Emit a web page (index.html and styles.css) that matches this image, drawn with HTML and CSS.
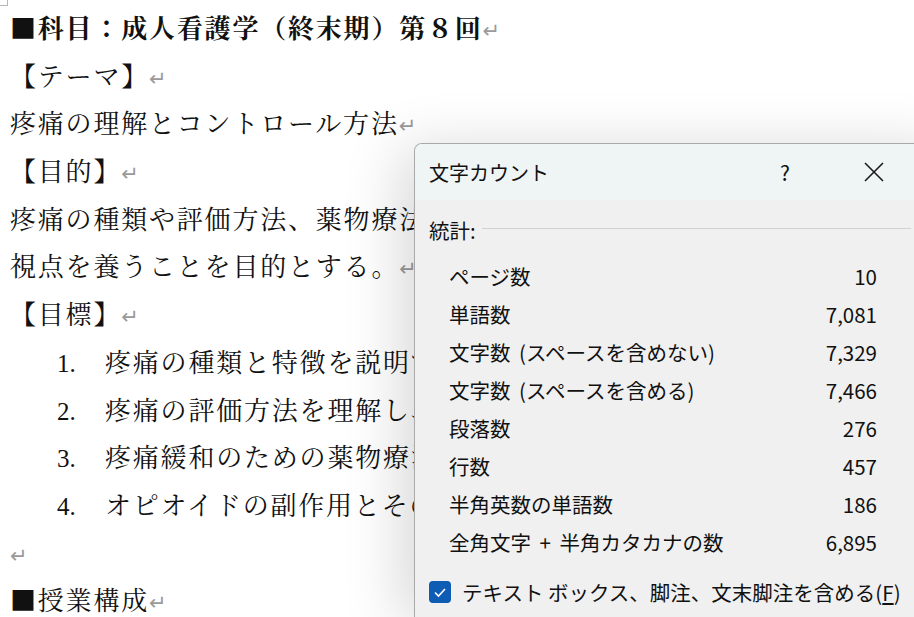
FILE: index.html
```html
<!DOCTYPE html>
<html lang="ja">
<head>
<meta charset="utf-8">
<link rel="stylesheet" href="styles.css">
</head>
<body>
<div class="corner"></div>
<main class="doc">
  <p class="line title">■科目：成人看護学（終末期）第８回<span class="pm">↵</span></p>
  <p class="line">【テーマ】<span class="pm">↵</span></p>
  <p class="line">疼痛の理解とコントロール方法<span class="pm">↵</span></p>
  <p class="line under">【目的】<span class="pm">↵</span></p>
  <p class="line under">疼痛の種類や評価方法、薬物療法</p>
  <p class="line under">視点を養うことを目的とする。<span class="pm">↵</span></p>
  <p class="line under">【目標】<span class="pm">↵</span></p>
  <p class="line under item"><span class="num">1.</span>疼痛の種類と特徴を説明で</p>
  <p class="line under item"><span class="num">2.</span>疼痛の評価方法を理解し、</p>
  <p class="line under item"><span class="num">3.</span>疼痛緩和のための薬物療法</p>
  <p class="line under item"><span class="num">4.</span>オピオイドの副作用とその</p>
  <p class="line under"><span class="pm">↵</span></p>
  <p class="line under">■授業構成<span class="pm">↵</span></p>
</main>

<section class="dialog">
  <header class="dlg-head">
    <span class="dlg-title">文字カウント</span>
    <span class="dlg-help">?</span>
    <svg class="dlg-close" width="22" height="22" viewBox="0 0 22 22"><path d="M2 2 L20 20 M20 2 L2 20" stroke="#1a1a1a" stroke-width="1.6" fill="none"/></svg>
  </header>
  <div class="dlg-body">
    <div class="group"><span>統計:</span><span class="rule"></span></div>
    <div class="stats">
      <div class="row"><span>ページ数</span><span>10</span></div>
      <div class="row"><span>単語数</span><span>7,081</span></div>
      <div class="row"><span>文字数 (スペースを含めない)</span><span>7,329</span></div>
      <div class="row"><span>文字数 (スペースを含める)</span><span>7,466</span></div>
      <div class="row"><span>段落数</span><span>276</span></div>
      <div class="row"><span>行数</span><span>457</span></div>
      <div class="row"><span>半角英数の単語数</span><span>186</span></div>
      <div class="row"><span>全角文字 + 半角カタカナの数</span><span>6,895</span></div>
    </div>
    <label class="check">
      <span class="box"><svg width="22" height="22" viewBox="0 0 22 22"><path d="M6 11.5 L9.5 15 L16 8" stroke="#fff" stroke-width="1.6" fill="none"/></svg></span>
      <span>テキスト ボックス、脚注、文末脚注を含める(<u>F</u>)</span>
    </label>
  </div>
</section>
</body>
</html>
```
FILE: styles.css
```css
html, body {
  margin: 0;
  padding: 0;
  background: #ffffff;
  overflow: hidden;
  width: 914px;
  height: 617px;
}
body {
  position: relative;
  font-family: "Noto Serif CJK JP", "Noto Sans CJK JP", serif;
  color: #111;
}
.corner {
  position: absolute;
  left: 0;
  top: 0;
  width: 7px;
  height: 5px;
  border-right: 1px solid #b8b8b8;
  border-bottom: 1px solid #b8b8b8;
}
.doc {
  padding: 3px 0 0 10px;
}
.line {
  margin: 0;
  height: 47.7px;
  line-height: 47.7px;
  font-size: 26px;
  letter-spacing: 1.8px;
  white-space: nowrap;
}
.under {
  width: 404px;
  overflow: hidden;
  box-sizing: border-box;
}
.title {
  font-weight: 700;
}
.pm {
  color: #9a9a9a;
  font-family: "DejaVu Sans", sans-serif;
  font-weight: 400;
  font-size: 21px;
  letter-spacing: 0;
}
.item {
  padding-left: 47px;
}
.num {
  display: inline-block;
  width: 48px;
  font-family: "Liberation Serif", serif;
  font-size: 25px;
  letter-spacing: 0;
}
.dialog {
  position: absolute;
  left: 414px;
  top: 143px;
  width: 540px;
  height: 474px;
  border: 1px solid #a9a9a9;
  border-bottom: 0;
  border-radius: 8px 8px 0 0;
  background: #f0f0f0;
  box-shadow: -12px 6px 60px rgba(0, 0, 0, 0.16);
  overflow: hidden;
  font-family: "Noto Sans CJK JP", sans-serif;
  color: #111;
  font-size: 20.5px;
  word-spacing: 4px;
}
.dlg-head {
  height: 56px;
  background: #eff4f5;
  display: flex;
  align-items: center;
  padding-left: 14px;
  font-size: 20px;
  word-spacing: 0;
}
.dlg-title {
  width: 351px;
}
.dlg-help {
  width: 83px;
  font-size: 21px;
}
.dlg-close {
  display: block;
}
.dlg-body {
  padding: 14px 0 0 14px;
}
.group {
  display: flex;
  align-items: center;
  gap: 6px;
  height: 32px;
  width: 482px;
}
.rule {
  flex: 1;
  height: 1px;
  background: #d2d2d2;
  margin-top: -4px;
}
.stats {
  padding: 11px 0 0 20px;
  width: 428px;
}
.row {
  display: flex;
  justify-content: space-between;
  height: 38px;
  line-height: 38px;
}
.check {
  display: flex;
  align-items: center;
  gap: 11px;
  margin-top: 16px;
  word-spacing: 0;
}
.box {
  width: 22px;
  height: 22px;
  border-radius: 4px;
  background: #0f5cb5;
  display: block;
}
.box svg {
  display: block;
}
```
